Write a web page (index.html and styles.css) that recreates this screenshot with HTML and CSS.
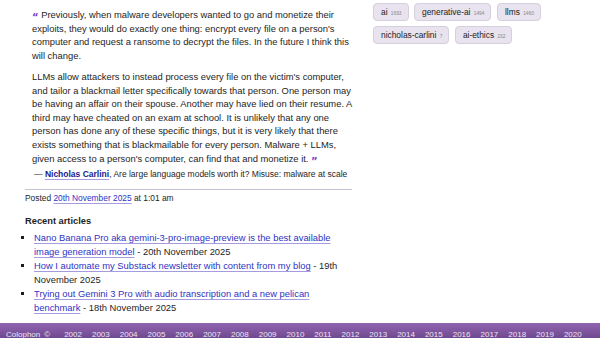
FILE: index.html
```html
<!DOCTYPE html>
<html lang="en">
<head>
  <meta charset="UTF-8">
  <title>Quoting Nicholas Carlini</title>
  <link rel="stylesheet" href="styles.css">
</head>
<body>
  <div class="page">
    <div class="primary">
      <!-- Quotation -->
      <blockquote class="quote">
        <p><span class="qmark">&ldquo;</span> Previously, when malware developers wanted to go and monetize their exploits, they would do exactly one thing: encrypt every file on a person's computer and request a ransome to decrypt the files. In the future I think this will change.</p>
        <p>LLMs allow attackers to instead process every file on the victim's computer, and tailor a blackmail letter specifically towards that person. One person may be having an affair on their spouse. Another may have lied on their resume. A third may have cheated on an exam at school. It is unlikely that any one person has done any of these specific things, but it is very likely that there exists something that is blackmailable for every person. Malware + LLMs, given access to a person's computer, can find that and monetize it. <span class="qmark">&rdquo;</span></p>
      </blockquote>
      <p class="cite">&mdash; <a href="#">Nicholas Carlini</a>, Are large language models worth it? Misuse: malware at scale</p>

      <p class="posted">Posted <a href="#">20th November 2025</a> at 1:01 am</p>

      <h3 class="recent-title">Recent articles</h3>
      <ul class="recent">
        <li><a href="#">Nano Banana Pro aka gemini-3-pro-image-preview is the best available image generation model</a> - 20th November 2025</li>
        <li><a href="#">How I automate my Substack newsletter with content from my blog</a> - 19th November 2025</li>
        <li><a href="#">Trying out Gemini 3 Pro with audio transcription and a new pelican benchmark</a> - 18th November 2025</li>
      </ul>
    </div>

    <div class="secondary">
      <div class="tags">
        <a class="tag" href="#">ai <span class="count">1693</span></a>
        <a class="tag" href="#">generative-ai <span class="count">1494</span></a>
        <a class="tag" href="#">llms <span class="count">1460</span></a>
        <a class="tag" href="#">nicholas-carlini <span class="count">7</span></a>
        <a class="tag" href="#">ai-ethics <span class="count">232</span></a>
      </div>
    </div>
  </div>

  <div class="footer">
    <a href="#" class="colophon">Colophon</a>
    <span class="copy">&copy;</span>
    <a href="#">2002</a>
    <a href="#">2003</a>
    <a href="#">2004</a>
    <a href="#">2005</a>
    <a href="#">2006</a>
    <a href="#">2007</a>
    <a href="#">2008</a>
    <a href="#">2009</a>
    <a href="#">2010</a>
    <a href="#">2011</a>
    <a href="#">2012</a>
    <a href="#">2013</a>
    <a href="#">2014</a>
    <a href="#">2015</a>
    <a href="#">2016</a>
    <a href="#">2017</a>
    <a href="#">2018</a>
    <a href="#">2019</a>
    <a href="#">2020</a>
  </div>
</body>
</html>
```

FILE: styles.css
```css
/* Blog entry page */
body {
  margin: 0;
  font-family: "Liberation Sans", Arial, sans-serif;
  font-size: 9.4px;
  line-height: 13.6px;
  color: #1e1e1e;
  background: #fff;
}

a {
  color: #2f33c4;
  text-decoration: underline;
  text-decoration-color: #a59ce0;
  text-underline-offset: 1.5px;
}

.page {
  display: flex;
  align-items: flex-start;
  padding-left: 25px;
  height: 323px;
  overflow: hidden;
}

.primary {
  width: 327px;
  padding-top: 8px;
}

.secondary {
  margin-left: 21px;
  padding-top: 3px;
  width: 200px;
}

/* Quote */
.quote {
  margin: 0 0 0 7px;
  width: 320px;
}

.quote p {
  margin: 0 0 7.6px;
}

.quote p:last-child {
  margin-bottom: 0;
}

.qmark {
  color: #7b3fd0;
  font-family: "DejaVu Sans", sans-serif;
  font-weight: bold;
  font-size: 10px;
  line-height: 0;
  position: relative;
  top: 3px;
}

.cite {
  margin: 4px 0 0 9px;
  font-size: 8.5px;
  line-height: 11px;
}

.cite a {
  font-weight: bold;
  color: #22228f;
}

.posted {
  margin: 9px 0 0;
  padding-top: 3px;
  border-top: 1.5px solid #c8c0d2;
  font-size: 8.4px;
  line-height: 11px;
}

.recent-title {
  margin: 10.5px 0 4px;
  font-size: 9.3px;
  line-height: 12px;
}

.recent {
  margin: 0;
  padding-left: 9px;
  list-style: square;
  line-height: 14px;
}

/* Tags */
.tags {
  display: flex;
  flex-wrap: wrap;
  gap: 5px 5.5px;
}

.tag {
  display: inline-block;
  height: 16px;
  line-height: 16px;
  padding: 0 6px 0 7px;
  font-size: 8.4px;
  color: #222;
  text-decoration: none;
  background: #e8e3ee;
  border: 1px solid #d6cfdd;
  border-radius: 4px;
}

.count {
  font-size: 4.8px;
  color: #888;
  margin-left: 1px;
}

/* Footer */
.footer {
  display: flex;
  align-items: flex-start;
  height: 15px;
  padding: 7px 0 0 6px;
  box-sizing: border-box;
  background: linear-gradient(#9164b0, #6f4a90);
  font-size: 8px;
  line-height: 9px;
  white-space: nowrap;
  overflow: hidden;
}

.footer a,
.footer span {
  color: #ece4f4;
  text-decoration: none;
  margin-right: 10px;
}

.footer .colophon {
  margin-right: 4px;
}

.footer .copy {
  margin-right: 14px;
}
```
